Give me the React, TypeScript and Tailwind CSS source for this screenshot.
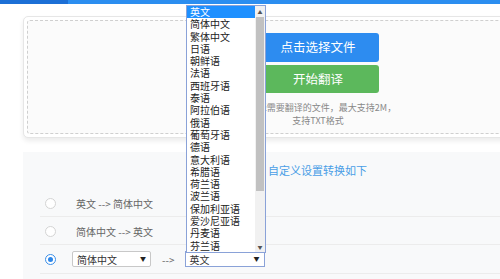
import React from 'react';

const langs = [
  '英文', '简体中文', '繁体中文', '日语', '朝鲜语', '法语', '西班牙语', '泰语', '阿拉伯语', '俄语',
  '葡萄牙语', '德语', '意大利语', '希腊语', '荷兰语', '波兰语', '保加利亚语', '爱沙尼亚语', '丹麦语', '芬兰语',
];

const font = { fontFamily: '"Noto Sans CJK SC", "Liberation Sans", sans-serif' };

const Radio = ({ checked }: { checked?: boolean }) => (
  <span
    className={`w-[11px] h-[11px] rounded-full border bg-white flex items-center justify-center shrink-0 ${
      checked ? 'border-[#3b8fe8]' : 'border-[#d4d4d4]'
    }`}
  >
    {checked && <span className="w-[5px] h-[5px] rounded-full bg-[#2d86e8]" />}
  </span>
);

const Arrow = () => <span className="text-[6px] leading-none text-[#222]">▼</span>;

const App: React.FC = () => {
  return (
    <div className="relative w-[500px] h-[279px] overflow-hidden bg-white text-[#555]" style={font}>
      {/* top bar */}
      <div className="flex h-[4px]">
        <div className="w-[68px] bg-[#1c6fd6]" />
        <div className="flex-1 bg-[#2b8ef0]" />
      </div>

      {/* upload card */}
      <div className="ml-[23px] mt-[12px] w-[600px] h-[122px] p-[3px] bg-white border border-[#e6e6e6] rounded-[5px] shadow-[0_3px_5px_rgba(0,0,0,0.08)]">
        <div className="h-full border border-dashed border-[#cfcfcf] rounded-[3px] bg-[#fbfbfb] pt-[12px] pl-[229px]">
          <div className="w-[122px] flex flex-col gap-[3px]">
            <div className="h-[29px] rounded-[3px] bg-[#2d8cf0] text-white text-[12.5px] flex items-center justify-center">
              点击选择文件
            </div>
            <div className="h-[28px] rounded-[3px] bg-[#5cb85c] text-white text-[12.5px] flex items-center justify-center">
              开始翻译
            </div>
            <div className="mt-[5px] -mx-[20px] text-[9px] leading-[13px] text-[#888] text-center whitespace-nowrap">
              <div>请选择需要翻译的文件，最大支持2M，</div>
              <div>支持TXT格式</div>
            </div>
          </div>
        </div>
      </div>

      {/* settings section */}
      <div className="ml-[23px] mt-[14px] w-[600px] h-[127px] bg-[#f8f9fa]">
        <div className="pt-[11px] pl-[245px] text-[11px] leading-[14px] text-[#4a9ee6]">自定义设置转换如下</div>
        <div className="mt-[13px] ml-[17px] text-[10px] text-[#666]">
          <div className="h-[27px] flex items-center pl-[5px] gap-[20px] border-b border-[#ececec]">
            <Radio />
            <span>英文 --&gt; 简体中文</span>
          </div>
          <div className="h-[28px] flex items-center pl-[5px] pt-[2px] gap-[20px] border-b border-[#ececec]">
            <Radio />
            <span>简体中文 --&gt; 英文</span>
          </div>
          <div className="h-[29px] flex items-center pl-[5px] border-b border-[#ececec]">
            <Radio checked />
            <div className="ml-[16px] w-[79px] h-[16px] border border-[#c8c8c8] rounded-[2px] bg-white flex items-center justify-between px-[4px] text-[#333]">
              <span>简体中文</span>
              <Arrow />
            </div>
            <span className="ml-[11px] text-[#666]">--&gt;</span>
            <div className="ml-[10px] w-[80px] h-[16px] border border-[#8aa2d8] bg-white flex items-center justify-between px-[4px] text-[#333]">
              <span>英文</span>
              <Arrow />
            </div>
          </div>
        </div>
      </div>

      {/* open dropdown list */}
      <div className="absolute left-[186px] top-[5px] w-[80px] h-[248px] border border-[#8aa2d8] bg-white flex text-[10px] text-[#222]">
        <div className="flex-1 min-w-0">
          {langs.map((l, i) => (
            <div
              key={l}
              className={`h-[12.3px] leading-[12.3px] pl-[3px] whitespace-nowrap overflow-hidden ${
                i === 0 ? 'bg-[#1e90ff] text-white' : ''
              }`}
            >
              {l}
            </div>
          ))}
        </div>
        <div className="w-[10px] bg-[#f1f1f1] flex flex-col items-center">
          <div className="h-[11px] flex items-center text-[5px] text-[#555]">▲</div>
          <div className="w-[8px] h-[174px] bg-[#c1c1c1]" />
          <div className="flex-1" />
          <div className="h-[11px] flex items-center text-[5px] text-[#555]">▼</div>
        </div>
      </div>
    </div>
  );
};

export default App;
